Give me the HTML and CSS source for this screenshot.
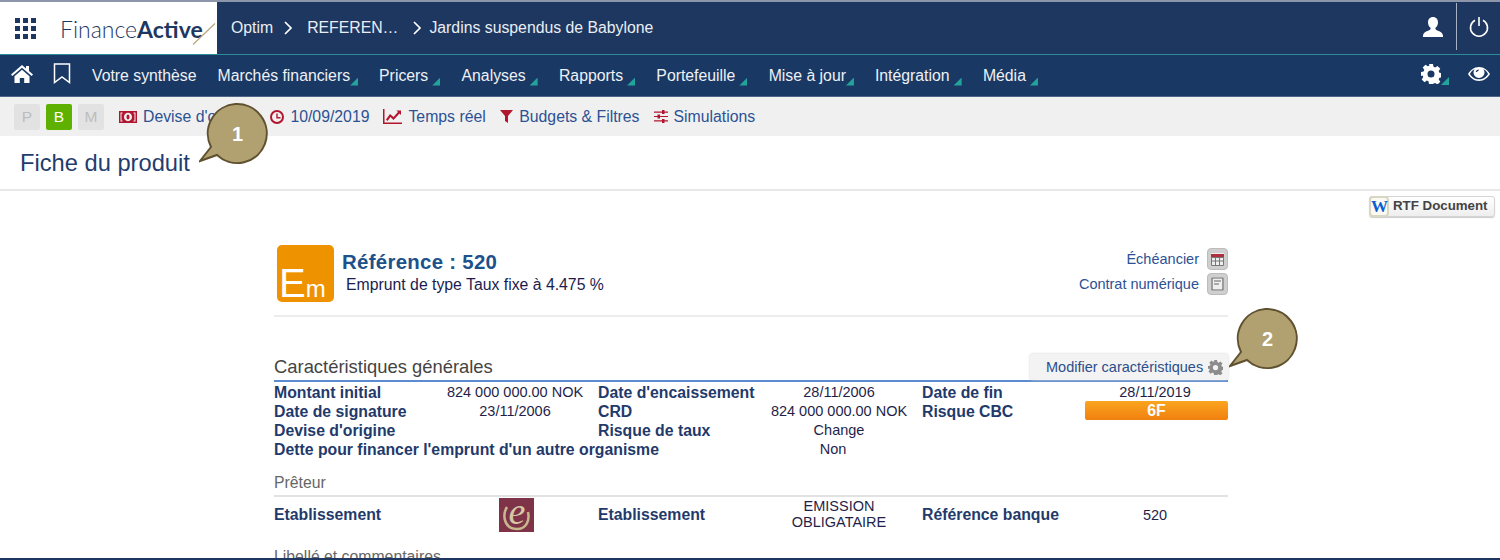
FILE: index.html
```html
<!DOCTYPE html>
<html lang="fr">
<head>
<meta charset="utf-8">
<title>Fiche du produit</title>
<link rel="stylesheet" href="styles.css">
</head>
<body>
<div class="page">
  <header class="topbar">
    <div class="brand">
      <svg class="apps" viewBox="0 0 21 21" width="21" height="21"><path d="M0 0h5v5H0zM8 0h5v5H8zM16 0h5v5h-5zM0 8h5v5H0zM8 8h5v5H8zM16 8h5v5h-5zM0 16h5v5H0zM8 16h5v5H8zM16 16h5v5h-5z"/></svg>
      <span class="logo">Finance<b>Active</b></span>
      <svg class="slash" viewBox="0 0 24 22" width="24" height="22"><path d="M1 21.500 23 .5"/></svg>
    </div>
    <nav class="crumbs">
      <span>Optim</span>
      <svg class="chev" viewBox="0 0 10 16" width="10" height="16"><path d="M2 2l6 6-6 6"/></svg>
      <span>REFEREN…</span>
      <svg class="chev chev-b" viewBox="0 0 10 16" width="10" height="16"><path d="M2 2l6 6-6 6"/></svg>
      <span>Jardins suspendus de Babylone</span>
    </nav>
    <div class="session">
      <svg class="ico-user" viewBox="0 0 20 20" width="20" height="20"><path d="M10 0c3.200 0 5 2.300 5 5.500 0 2.200-1 4.100-2.300 5.100-.4.400-.3 1.400 0 1.800C14 13.800 20 14.400 20 19v1H0v-1c0-4.600 6-5.200 7.300-6.600.3-.4.400-1.400 0-1.800C6 9.600 5 7.700 5 5.500 5 2.300 6.800 0 10 0z"/></svg>
      <span class="divider"></span>
      <svg class="ico-power" viewBox="0 0 20 20" width="20" height="20"><path d="M6 3.200a8.500 8.500 0 1 0 8 0M10 0v9"/></svg>
    </div>
  </header>

  <nav class="menu">
    <svg class="ico-home" viewBox="0 0 22 18" width="22" height="18"><path d="M11 0 0 9.500 1.300 11 11 2.700 20.700 11 22 9.500 18 6V1h-3v2.500zM3.500 11.200V18h5.300v-5h4.400v5h5.300v-6.800L11 4.800z"/></svg>
    <svg class="ico-mark" viewBox="0 0 18 21" width="18" height="21"><path d="M1.500 1h15v18.500L9 14l-7.500 5.500z"/></svg>
    <a class="item first">Votre synthèse</a>
    <a class="item tri tight">Marchés financiers</a>
    <a class="item tri">Pricers</a>
    <a class="item tri">Analyses</a>
    <a class="item tri">Rapports</a>
    <a class="item tri">Portefeuille</a>
    <a class="item tri tight">Mise à jour</a>
    <a class="item tri">Intégration</a>
    <a class="item tri">Média</a>
    <span class="menu-end">
      <span class="gear-wrap tri">
        <svg viewBox="0 0 20 20" width="20" height="20" class="ico-gear"><path fill-rule="evenodd" d="M8 0h4l.5 2.800 1.700.7 2.300-1.600 2.800 2.800-1.600 2.300.7 1.700 2.600.5v4l-2.600.5-.7 1.700 1.600 2.300-2.800 2.800-2.300-1.600-1.700.7L12 20H8l-.5-2.700-1.700-.7-2.300 1.600-2.800-2.800 1.600-2.300-.7-1.700L0 12V8l2.600-.5.7-1.700-1.600-2.300 2.800-2.800 2.300 1.600 1.700-.7zM10 6.500a3.500 3.500 0 1 0 0 7 3.500 3.500 0 0 0 0-7z"/></svg>
      </span>
      <svg class="ico-eye" viewBox="0 0 22 14" width="22" height="14"><path fill-rule="evenodd" d="M11 0c5 0 9 3.500 11 7-2 3.500-6 7-11 7S2 10.500 0 7c2-3.500 6-7 11-7zM6.800 2C4.600 3 3 4.800 1.900 7c1.700 3 5 5.300 9.100 5.300S18.400 10 20.100 7c-1.100-2.200-2.700-4-4.900-5 .8 1 1.300 2.200 1.300 3.600 0 3-2.500 5.400-5.500 5.400S5.500 8.600 5.500 5.600C5.500 4.200 6 3 6.800 2zM11 2.500c-1.900 0-3.200 1.100-3.200 2.500h1.500C9.300 4 10 3.500 11 3.500z"/></svg>
    </span>
  </nav>

  <div class="toolbar">
    <span class="pill">P</span>
    <span class="pill on">B</span>
    <span class="pill">M</span>
    <a class="tool t-first"><svg viewBox="0 0 18 12" width="18" height="12"><path fill-rule="evenodd" d="M0 0h18v12H0zM1.500 1.500h2v1h-1v7h1v1h-2zM16.500 1.500h-2v1h1v7h-1v1h2zM9 1.800c2.200 0 4 1.900 4 4.200s-1.800 4.200-4 4.200S5 8.300 5 6s1.800-4.200 4-4.200zM9 3.500c-.9 0-1.500 1.100-1.500 2.500s.6 2.500 1.500 2.500 1.500-1.100 1.500-2.500S9.900 3.500 9 3.500z"/></svg>Devise d'origine</a>
    <a class="tool t-date"><svg viewBox="0 0 14 14" width="14" height="14"><path fill-rule="evenodd" d="M7 0a7 7 0 1 1 0 14A7 7 0 0 1 7 0zm0 2a5 5 0 1 0 0 10A5 5 0 0 0 7 2zM6.300 3.500h1.400V7h2.800v1.400H6.300z"/></svg>10/09/2019</a>
    <a class="tool"><svg viewBox="0 0 19 15" width="19" height="15"><path d="M0 0h1.500v13.500H19V15H0zM3 10.500 7 5l3.500 3L15 3l-1.500-1.500H18V6l-1.500-1.500-6 6.500L7.500 8l-3 4z"/></svg>Temps réel</a>
    <a class="tool t-budget"><svg viewBox="0 0 13 13" width="13" height="13"><path d="M0 0h13L8 6v7L5 11V6z"/></svg>Budgets &amp; Filtres</a>
    <a class="tool"><svg viewBox="0 0 14 13" width="14" height="13"><path d="M0 1.500h14v1.200H0zM0 5.900h14v1.200H0zM0 10.300h14v1.200H0zM8 0h2.500v4H8zM3.500 4.500H6v4H3.500zM8 9h2.500v4H8z"/></svg>Simulations</a>
  </div>

  <h1 class="title">Fiche du produit</h1>

  <main class="body">
    <div class="rtf-row">
      <a class="rtf"><span class="rtf-w">W</span><span class="rtf-t">RTF Document</span></a>
    </div>

    <section class="sheet">
      <div class="head">
        <div class="em"><span class="em-e">E</span><span class="em-m">m</span></div>
        <div class="head-text">
          <h2 class="ref">Référence : 520</h2>
          <p class="sub">Emprunt de type Taux fixe à 4.475 %</p>
        </div>
        <div class="head-links">
          <a class="hl">Échéancier
            <span class="sq"><svg viewBox="0 0 13 13" width="13" height="13"><path class="cal-top" d="M0 1h13v3.500H0z"/><path class="cal-g" d="M.5 4.500h12v8H.5zM.5 8h12M4.500 4.500v8M8.500 4.500v8"/></svg></span>
          </a>
          <a class="hl">Contrat numérique
            <span class="sq"><svg viewBox="0 0 13 14" width="13" height="14"><path class="doc" d="M1 1h11v12H1zM3 4h7M3 7h5"/></svg></span>
          </a>
        </div>
      </div>

      <div class="sec-head">
        <h3 class="sec-title">Caractéristiques générales</h3>
        <a class="modify">Modifier caractéristiques
          <svg viewBox="0 0 20 20" width="15" height="15"><path fill-rule="evenodd" d="M8 0h4l.5 2.800 1.700.7 2.300-1.600 2.800 2.800-1.600 2.300.7 1.700 2.600.5v4l-2.600.5-.7 1.700 1.600 2.300-2.800 2.800-2.300-1.600-1.700.7L12 20H8l-.5-2.700-1.700-.7-2.300 1.600-2.800-2.800 1.600-2.300-.7-1.700L0 12V8l2.600-.5.7-1.700-1.600-2.300 2.800-2.800 2.300 1.600 1.700-.7zM10 6.500a3.500 3.500 0 1 0 0 7 3.500 3.500 0 0 0 0-7z"/></svg>
        </a>
      </div>

      <div class="grid first-grid">
        <span class="k">Montant initial</span><span class="v">824 000 000.00 NOK</span>
        <span class="k">Date d'encaissement</span><span class="v">28/11/2006</span>
        <span class="k">Date de fin</span><span class="v last">28/11/2019</span>

        <span class="k">Date de signature</span><span class="v">23/11/2006</span>
        <span class="k">CRD</span><span class="v">824 000 000.00 NOK</span>
        <span class="k">Risque CBC</span><span class="v last"><span class="risk">6F</span></span>

        <span class="k">Devise d'origine</span><span class="v"></span>
        <span class="k">Risque de taux</span><span class="v">Change</span>
        <span class="k"></span><span class="v last"></span>

        <span class="k span3">Dette pour financer l'emprunt d'un autre organisme</span><span class="v non">Non</span>
      </div>

      <h3 class="sub-title">Prêteur</h3>
      <div class="grid lender">
        <span class="k">Etablissement</span>
        <span class="v v-logo"><span class="elogo"><svg viewBox="0 0 35 34" width="35" height="34"><path d="M8 9C3 17 5 31 18 31c9 0 13-8 11-17"/></svg><i>e</i></span></span>
        <span class="k">Etablissement</span><span class="v">EMISSION OBLIGATAIRE</span>
        <span class="k">Référence banque</span><span class="v last">520</span>
      </div>

      <h3 class="sub-title next">Libellé et commentaires</h3>
    </section>
  </main>

  <div class="callout c1">
    <svg viewBox="0 0 72 64" width="72" height="64"><path d="M12 45A29.500 29.500 0 1 1 18 53L1 59z"/></svg>
    <span>1</span>
  </div>
  <div class="callout c2">
    <svg viewBox="0 0 72 64" width="72" height="64"><path d="M12 45A29.500 29.500 0 1 1 18 53L1 59z"/></svg>
    <span>2</span>
  </div>
</div>
</body>
</html>
```

FILE: styles.css
```css
* { box-sizing: border-box; }
html, body { margin: 0; padding: 0; }
body { font-family: "Liberation Sans", Arial, sans-serif; background: #fff; }
h1, h2, h3, p { margin: 0; font-weight: normal; }
a { color: inherit; text-decoration: none; }
svg { display: block; flex: none; }

.page {
  position: relative;
  width: 1500px;
  height: 560px;
  display: flex;
  flex-direction: column;
  overflow: hidden;
  border-bottom: 2px solid #1e3760;
}

/* top bar */
.topbar {
  flex: none;
  height: 55px;
  display: flex;
  background: #1e3760;
  border-top: 2px solid #8d95aa;
  border-bottom: 1px solid #2a8b9b;
}
.brand {
  position: relative;
  width: 217px;
  background: #fff;
  display: flex;
  align-items: center;
  padding-left: 15px;
}
.apps { fill: #1e3760; }
.logo {
  margin-left: 24px;
  font-family: Lato, sans-serif;
  font-size: 23px;
  font-weight: 300;
  color: #1e3760;
  margin-top: 1px;
}
.logo b { font-weight: 700; color: #1e3760; }
.slash { position: absolute; left: 192px; top: 21px; }
.slash path { stroke: #bba97c; stroke-width: 1.300; fill: none; }
.crumbs {
  display: flex;
  align-items: center;
  padding: 0 0 1px 14px;
  color: #eaeef4;
  font-size: 15.800px;
}
.chev { margin: 0 14px 0 10px; }
.chev-b { margin: 0 7px 0 14px; }
.chev path { fill: none; stroke: #fff; stroke-width: 1.700; }
.session {
  margin-left: auto;
  display: flex;
  align-items: center;
  padding-right: 11px;
}
.ico-user { fill: #fff; margin-top: -3px; }
.divider { width: 1px; height: 47px; background: #a9b2c2; margin: 1px 12px 0 13px; align-self: flex-start; }
.ico-power { fill: none; stroke: #fff; stroke-width: 1.600; margin-top: -2px; }

/* menu */
.menu {
  flex: none;
  height: 42px;
  display: flex;
  align-items: center;
  background: #1a3864;
  border-bottom: 1px solid #4e6488;
  color: #eef1f6;
  font-size: 15.800px;
  padding: 0 10px 1px 11px;
}
.ico-home { fill: #fff; margin-top: -3px; }
.ico-mark { fill: none; stroke: #fff; stroke-width: 1.500; margin: -3px 0 0 20px; }
.item { position: relative; margin: 1px 0 0 33.300px; white-space: nowrap; }
.item.first { margin-left: 21px; }
.item.tight + .item { margin-left: 29px; }
.first + .item { margin-left: 21px; }
.tri::after {
  content: "";
  position: absolute;
  right: -12px;
  bottom: -1px;
  width: 8px;
  height: 8px;
  background: #22a39c;
  clip-path: polygon(100% 0, 100% 100%, 0 100%);
}
.item.tight::after { right: -8px; }
.menu-end { margin-left: auto; display: flex; align-items: center; }
.gear-wrap { position: relative; }
.gear-wrap::after { right: -8px; bottom: -1px; }
.ico-gear { fill: #fff; margin-top: -2px; }
.ico-eye { fill: #fff; margin: -2px 0 0 27px; }

/* toolbar */
.toolbar {
  flex: none;
  height: 39px;
  display: flex;
  align-items: center;
  background: #f0f0f0;
  padding-left: 14px;
  color: #2c5294;
  font-size: 15.800px;
}
.pill {
  width: 26px;
  height: 26px;
  margin-right: 6px;
  border-radius: 2px;
  background: #e2e2e2;
  color: #bdbdbd;
  display: flex;
  align-items: center;
  justify-content: center;
  font-size: 15.500px;
}
.pill.on { background: #5eb100; color: #fff; }
.tool { display: flex; align-items: center; margin-left: 14px; white-space: nowrap; }
.tool svg { fill: #b2162f; margin-right: 6px; }
.t-first { margin-left: 9px; }
.t-date { margin-left: 15.500px; }
.t-budget { margin-left: 14.500px; }

/* title */
.title {
  flex: none;
  height: 55px;
  padding: 14px 0 0 20px;
  font-size: 23.700px;
  color: #1f3d6d;
  border-bottom: 2px solid #e8e8e8;
}

/* body */
.body { flex: 1; min-height: 0; overflow: hidden; }
.rtf-row { display: flex; justify-content: flex-end; padding: 5px 5px 0 0; }
.rtf {
  display: flex;
  align-items: center;
  height: 21px;
  width: 126px;
  border: 1px solid #d4d4d4;
  border-radius: 3px;
  background: linear-gradient(#fff, #eeeeee);
  box-shadow: 0 1px 1px #ccc;
  color: #444;
  font-size: 13.300px;
  font-weight: bold;
}
.rtf-t { margin-top: -2px; }
.rtf-w {
  width: 20px;
  height: 21px;
  margin: -1px 4px 0 -1px;
  border: 2px solid #d9d6c2;
  border-radius: 4px;
  background: #fafaf2;
  color: #0a5fd0;
  font-family: "Liberation Serif", serif;
  font-size: 17px;
  line-height: 17px;
  text-align: center;
}
.sheet { width: 954px; margin: 28px 0 0 274px; }
.head {
  display: flex;
  height: 72px;
  padding-left: 3px;
  border-bottom: 2px solid #ececec;
}
.em {
  width: 57px;
  height: 57px;
  border-radius: 5px;
  background: #ef9200;
  color: #fff;
  padding: 19px 0 0 2px;
  line-height: 38px;
  white-space: nowrap;
}
.em-e { font-size: 40px; }
.em-m { font-size: 24px; }
.head-text { margin-left: 8px; padding-top: 5px; }
.ref { font-size: 20.400px; font-weight: bold; color: #1d5189; line-height: 24px; letter-spacing: .3px; }
.sub { font-size: 15.800px; color: #1c1c4f; padding: 3px 0 0 4px; line-height: 16px; }
.head-links { margin-left: auto; display: flex; flex-direction: column; align-items: flex-end; gap: 3px; padding-top: 3px; }
.hl { display: flex; align-items: center; gap: 8px; font-size: 14.500px; color: #2c5294; height: 22px; }
.sq {
  width: 21px;
  height: 22px;
  border-radius: 4px;
  background: #cfcfcf;
  border: 1px solid #bcbcbc;
  display: flex;
  align-items: center;
  justify-content: center;
}
.sq svg { background: #eee; }
.cal-top { fill: #b0303d; }
.cal-g { fill: none; stroke: #777; stroke-width: 1; }
.doc { fill: none; stroke: #666; stroke-width: 1.200; }

.sec-head {
  display: flex;
  align-items: flex-end;
  justify-content: space-between;
  height: 65px;
  border-bottom: 2px solid #5b8bd0;
}
.sec-title { font-size: 18.400px; color: #444; padding-bottom: 2px; }
.modify {
  display: flex;
  align-items: center;
  gap: 5px;
  width: 198px;
  height: 26px;
  padding-left: 16px;
  background: #f3f3f3;
  border-radius: 3px;
  box-shadow: 0 0 3px #cfcfcf;
  color: #2c4f8c;
  font-size: 14.500px;
}
.modify svg { fill: #8c8c8c; }

.grid {
  display: grid;
  grid-template-columns: 163px 161px 163px 161px 163px 143px;
  grid-auto-rows: 19px;
  font-size: 14.500px;
  line-height: 19px;
}
.first-grid { padding-top: 1px; }
.k { font-weight: bold; color: #1f3a6b; font-size: 15.800px; white-space: nowrap; }
.v { color: #1f1f4a; text-align: center; padding-right: 5px; white-space: nowrap; }
.v.last { padding-right: 3px; }
.span3 { grid-column: span 3; }
.non { padding-right: 17px; }
.risk {
  display: block;
  height: 19px;
  margin: -1px -3px 0 0;
  border-radius: 2px;
  background: linear-gradient(#fba51e, #f0800f);
  color: #fff;
  font-weight: bold;
  font-size: 15.800px;
}
.sub-title { font-size: 15.800px; color: #666; margin-top: 15px; padding-bottom: 3px; line-height: 18px; border-bottom: 2px solid #e2e2e2; }
.lender { grid-auto-rows: 35px; align-items: center; }
.lender .v { white-space: normal; line-height: 16px; }
.lender .v:nth-child(4) { padding: 0 20px 2px 15px; }
.lender .v-logo { padding-right: 3px; }
.elogo {
  position: relative;
  display: block;
  width: 35px;
  height: 34px;
  margin: 0 auto;
  background: #7e3348;
}
.elogo svg { position: absolute; inset: 0; }
.elogo svg path { fill: none; stroke: #c6b78d; stroke-width: 2.500; }
.elogo i {
  position: absolute;
  left: 1px;
  top: 0;
  width: 35px;
  height: 34px;
  color: #d5c8a2;
  font-family: "Liberation Serif", serif;
  font-size: 38px;
  line-height: 26px;
  text-align: center;
}
.next { margin-top: 16px; border-bottom: 0; }

/* callouts */
.callout { position: absolute; width: 72px; height: 64px; }
.callout svg path { fill: #b1a170; stroke: #5f5130; stroke-width: 2; }
.callout span {
  position: absolute;
  left: 0;
  width: 77px;
  top: 20px;
  text-align: center;
  color: #fff;
  font-size: 20px;
  font-weight: bold;
  line-height: 24px;
}
.c1 { left: 199px; top: 102px; }
.c2 { left: 1229px; top: 307px; }
```
